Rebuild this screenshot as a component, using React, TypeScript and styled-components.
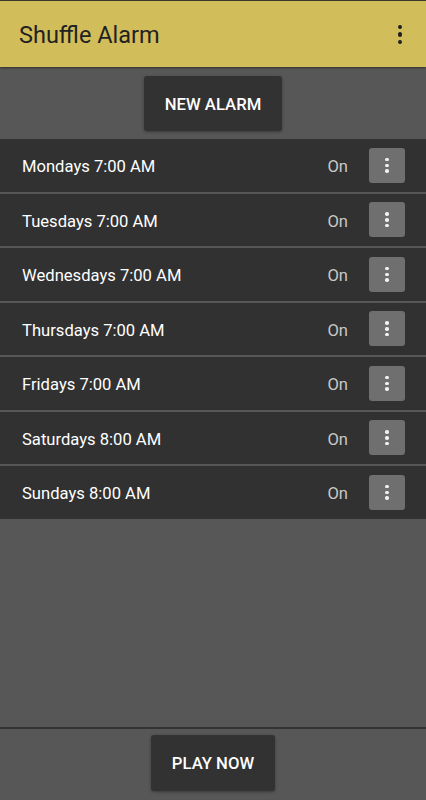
import React from 'react';
import styled, { createGlobalStyle } from 'styled-components';

const GlobalStyle = createGlobalStyle`
  html, body {
    margin: 0;
    padding: 0;
    background-color: #575757;
    font-family: Roboto, "Liberation Sans", sans-serif;
  }
`;

const Screen = styled.div`
  width: 426px;
  height: 800px;
  display: flex;
  flex-direction: column;
  background-color: #575757;
  overflow: hidden;
`;

const AppBar = styled.header`
  height: 67px;
  flex-shrink: 0;
  box-sizing: border-box;
  border-top: 1px solid #3a3a2a;
  background-color: #d2bd5b;
  display: flex;
  align-items: center;
  justify-content: space-between;
  padding: 1px 24px 0 19px;
  box-shadow: 0 1px 2px rgba(0, 0, 0, 0.45);
  position: relative;
  z-index: 1;

  h1 {
    margin: 0;
    font-size: 23.5px;
    font-weight: 400;
    color: #222;
  }
`;

const Dots = styled.div<{ $color: string; $size: number; $gap: number }>`
  display: flex;
  flex-direction: column;
  align-items: center;
  gap: ${p => p.$gap}px;

  span {
    display: block;
    width: ${p => p.$size}px;
    height: ${p => p.$size}px;
    border-radius: 50%;
    background-color: ${p => p.$color};
  }
`;

const ButtonBar = styled.div<{ $top: number; $bottom: number; $line?: boolean }>`
  display: flex;
  justify-content: center;
  padding: ${p => p.$top}px 0 ${p => p.$bottom}px;
  flex-shrink: 0;
  border-top: ${p => (p.$line ? '2px solid #333' : 'none')};
`;

const ActionButton = styled.button<{ $width: number; $height: number }>`
  width: ${p => p.$width}px;
  height: ${p => p.$height}px;
  border: none;
  border-radius: 3px;
  background-color: #323232;
  color: #fff;
  font-family: Roboto, "Liberation Sans", sans-serif;
  font-size: 16.7px;
  font-weight: 500;
  padding-top: 2px;
  box-shadow: 0 1px 3px rgba(0, 0, 0, 0.35);
`;

const AlarmList = styled.div`
  display: flex;
  flex-direction: column;
  gap: 2px;
`;

const AlarmRow = styled.div`
  height: 52.5px;
  display: flex;
  align-items: center;
  padding: 0 21px 0 22px;
  box-sizing: border-box;
  background-color: #313131;
  color: #fff;
  font-size: 16.6px;
`;

const AlarmLabel = styled.span`
  flex: 1;
  padding-top: 3px;
`;

const Status = styled.span`
  color: #c8c8c8;
  margin-right: 21px;
  padding-top: 3px;
`;

const RowMenu = styled.button`
  width: 36px;
  height: 35px;
  border: none;
  border-radius: 3px;
  background-color: #6f6f6f;
  display: flex;
  align-items: center;
  justify-content: center;
  padding: 0;
`;

const Spacer = styled.div`
  flex: 1;
`;

const alarms = [
  'Mondays 7:00 AM',
  'Tuesdays 7:00 AM',
  'Wednesdays 7:00 AM',
  'Thursdays 7:00 AM',
  'Fridays 7:00 AM',
  'Saturdays 8:00 AM',
  'Sundays 8:00 AM',
];

const App = () => {
  return (
    <>
      <GlobalStyle />
      <Screen>
        <AppBar>
          <h1>Shuffle Alarm</h1>
          <Dots $color="#1f1f1f" $size={4.5} $gap={2.8}>
            <span /><span /><span />
          </Dots>
        </AppBar>
        <ButtonBar $top={9} $bottom={8}>
          <ActionButton $width={138} $height={55}>NEW ALARM</ActionButton>
        </ButtonBar>
        <AlarmList>
          {alarms.map(label => (
            <AlarmRow key={label}>
              <AlarmLabel>{label}</AlarmLabel>
              <Status>On</Status>
              <RowMenu>
                <Dots $color="#f2f2f2" $size={3.5} $gap={2.3}>
                  <span /><span /><span />
                </Dots>
              </RowMenu>
            </AlarmRow>
          ))}
        </AlarmList>
        <Spacer />
        <ButtonBar $top={6} $bottom={9} $line>
          <ActionButton $width={124} $height={56}>PLAY NOW</ActionButton>
        </ButtonBar>
      </Screen>
    </>
  );
};

export default App;
